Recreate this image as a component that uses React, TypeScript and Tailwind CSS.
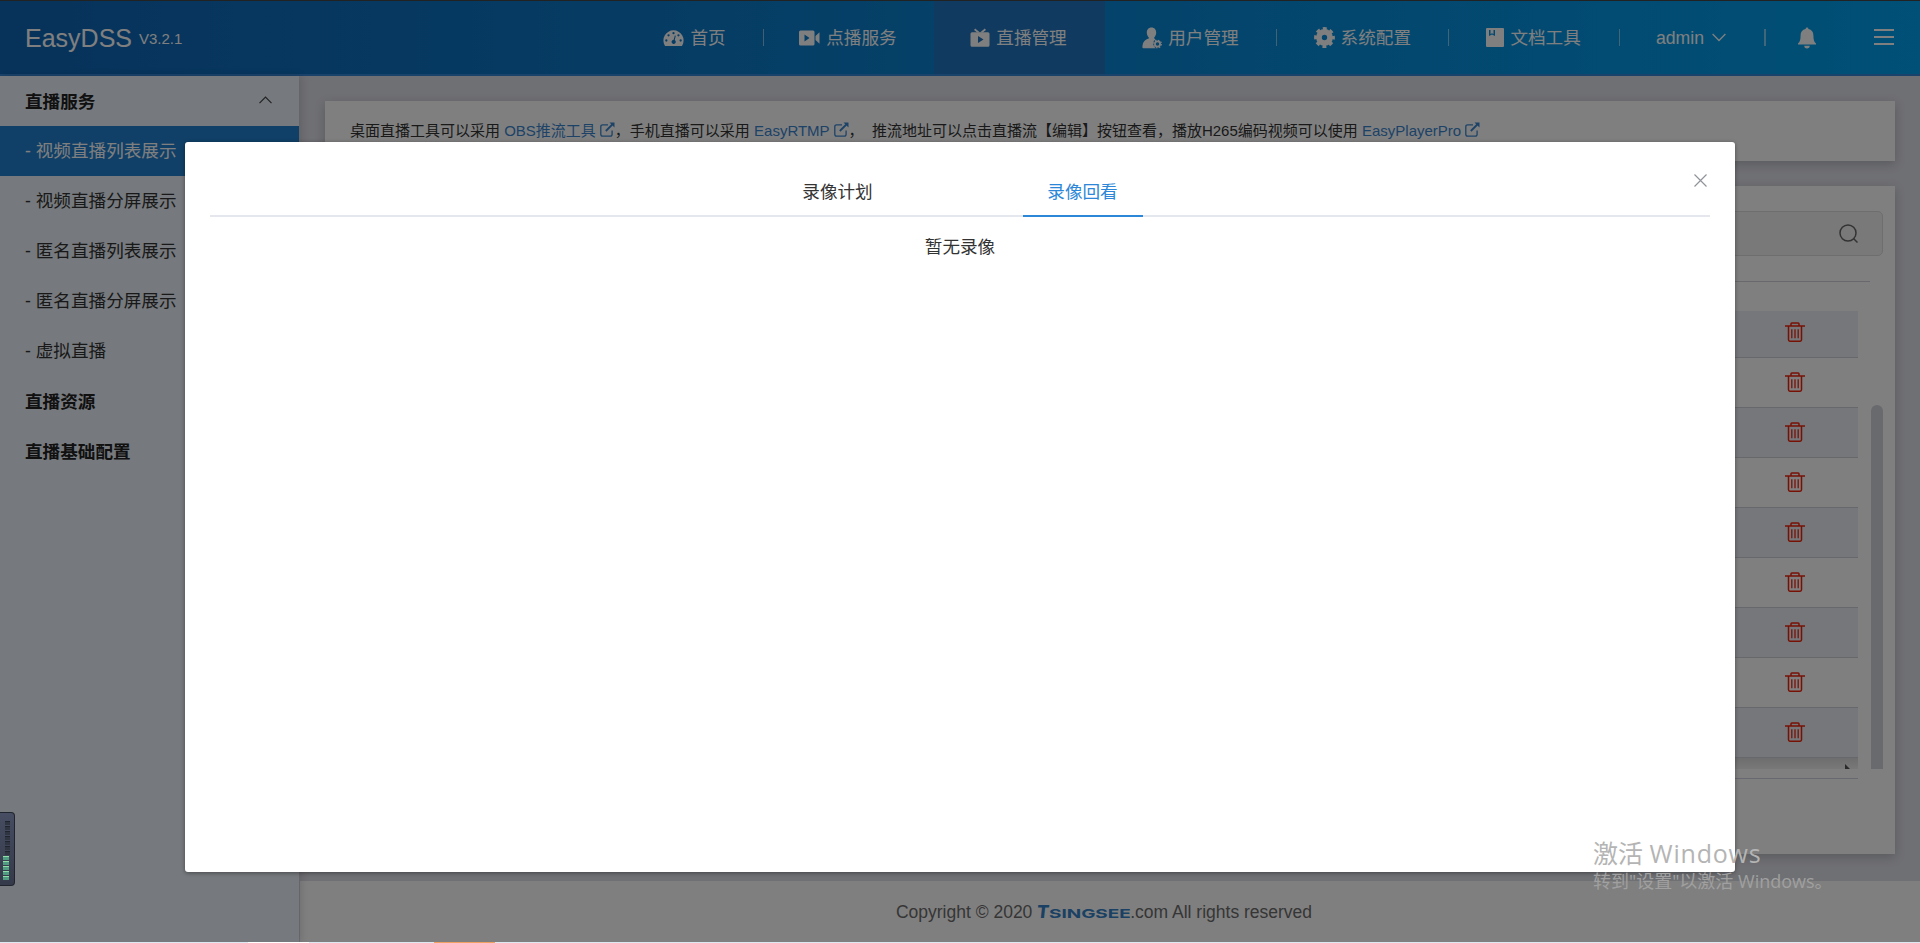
const navItems = [
  { label: "首页", icon: "dash", width: "w-[137px]" },
  { label: "点播服务", icon: "video", width: "w-[169.700px]" },
  { label: "直播管理", icon: "live", width: "w-[171.500px]" },
  { label: "用户管理", icon: "user", width: "w-[172.400px]" },
  { label: "系统配置", icon: "gear", width: "w-[171.300px]" },
  { label: "文档工具", icon: "book", width: "w-[171.300px]" },
];

const menuItems = ["视频直播列表展示", "视频直播分屏展示", "匿名直播列表展示", "匿名直播分屏展示", "虚拟直播"];

function NavIcon({ name }: { name: string }) {
  switch (name) {
    case "dash":
      return (
        <svg className="h-[18px] w-[21px]" viewBox="0 0 22 18" fill="currentColor">
          <path fillRule="evenodd" d="M11 1A10.500 10.500 0 0 0 1.700 16.500q.5.900 1.400.900h15.800q.9 0 1.400-.900A10.500 10.500 0 0 0 11 1Zm0 1.800a1.200 1.200 0 1 1 0 2.400 1.200 1.200 0 0 1 0-2.400ZM5.800 5a1.200 1.200 0 1 1 0 2.400 1.200 1.200 0 0 1 0-2.400Zm-2.300 5.400a1.200 1.200 0 1 1 0 2.400 1.200 1.200 0 0 1 0-2.400Zm15 0a1.200 1.200 0 1 1 0 2.400 1.200 1.200 0 0 1 0-2.400ZM16.200 5a1.200 1.200 0 1 1 0 2.400 1.200 1.200 0 0 1 0-2.400Zm-3.800 1.300 1 .3-1.100 4.600a2.200 2.200 0 1 1-1.100-.300Z" />
        </svg>
      );
    case "video":
      return (
        <svg className="h-[16px] w-[21px]" viewBox="0 0 21 16" fill="currentColor">
          <path fillRule="evenodd" d="M1.500.500h12.500q1.500 0 1.500 1.500v12q0 1.500-1.500 1.500H1.500Q0 15.500 0 14V2Q0 .5 1.500.500Zm4 4v7l5-3.500ZM16.500 6l4-3.800v11.600l-4-3.800Z" />
        </svg>
      );
    case "live":
      return (
        <svg className="h-[19px] w-[20px]" viewBox="0 0 20 19" fill="currentColor">
          <path d="m5.200.500 4.800 4 4.800-4 1.200 1.400L12.800 4.500H7.200L4 1.900Z" />
          <path fillRule="evenodd" d="M2 4.200h16q1.500 0 1.500 1.500v11.600q0 1.500-1.500 1.500H2q-1.500 0-1.500-1.500V5.700q0-1.500 1.500-1.500ZM8 8v7l5.500-3.500Z" />
        </svg>
      );
    case "user":
      return (
        <svg className="h-[22px] w-[20px]" viewBox="0 0 20 22" fill="currentColor">
          <path d="M9.500.5c3 0 4.700 2.200 4.700 5 0 2-.8 3.800-2 4.900v1.200l1.400.6a5 5 0 0 0-2.400 4.300c0 2.100 1 3.700 2.600 4.700H1.500Q.3 21.200.4 20c.4-5 2-7 6.400-8.600v-1C5.600 9.300 4.800 7.500 4.800 5.500c0-2.800 1.700-5 4.700-5Z" />
          <circle cx="15.500" cy="17" r="2.600" fill="none" stroke="currentColor" strokeWidth="1.700" />
          <circle cx="15.500" cy="17" r="3.800" fill="none" stroke="currentColor" strokeWidth="1.200" strokeDasharray="1.500 1.480" />
        </svg>
      );
    case "gear":
      return (
        <svg className="h-[21px] w-[21px]" viewBox="0 0 22 22" fill="currentColor">
          <circle cx="11" cy="11" r="5.800" fill="none" stroke="currentColor" strokeWidth="6" />
          <circle cx="11" cy="11" r="9.400" fill="none" stroke="currentColor" strokeWidth="3" strokeDasharray="4.100 3.283" strokeDashoffset="2.050" />
        </svg>
      );
    default:
      return (
        <svg className="h-[19px] w-[18px]" viewBox="0 0 18 19" fill="currentColor">
          <path fillRule="evenodd" d="M1 0h16q1 0 1 1v17q0 1-1 1H1q-1 0-1-1V1q0-1 1-1Zm2 2v6l3-1.500L9 8V2H7.500v4L6 5.200 4.500 6V2Z" />
        </svg>
      );
  }
}

function Header() {
  return (
    <header className="flex h-[76px] items-center border-t border-b-2 border-t-[#444] border-b-[#3586d8] bg-linear-to-r from-[#0f65b5] to-[#01a0ee] text-white">
      <div className="flex flex-1 items-center pl-[25px]">
        <span className="text-[25px] leading-[36px]">EasyDSS</span>
        <span className="mt-[3px] ml-[7px] text-[15px]">V3.2.1</span>
      </div>
      <nav className="flex h-full">
        {navItems.map((item, i) => (
          <div
            key={item.label}
            className={`relative flex h-full shrink-0 items-center justify-center gap-[6px] pr-[1.500px] text-[17.600px] ${item.width} ${i === 2 ? "bg-[#2075bf]" : ""}`}
          >
            <NavIcon name={item.icon} />
            <span className="pt-[2px]">{item.label}</span>
            {i !== 1 && i !== 2 && <i className="absolute right-0 h-[17px] w-px bg-white/50" />}
          </div>
        ))}
        <div className="relative flex w-[146px] items-center justify-center gap-2 pr-[4px] text-[17.600px]">
          <span className="pt-[2px]">admin</span>
          <svg className="h-[9px] w-[14px]" viewBox="0 0 14 9" fill="none" stroke="currentColor" strokeWidth="1.300">
            <path d="m.6 1 6.400 6.500L13.400 1" />
          </svg>
          <i className="absolute right-0 h-[17px] w-[2px] bg-white/50" />
        </div>
        <div className="flex w-[81px] items-center justify-center">
          <svg className="h-[22px] w-[18px]" viewBox="0 0 18 22" fill="currentColor">
            <path d="M7.600 2a1.400 1.400 0 0 1 2.800 0c3.400.7 5 3.100 5 6.400 0 4 .7 6.700 2.600 8.100v1H0v-1c1.900-1.400 2.600-4.100 2.600-8.100 0-3.300 1.600-5.700 5-6.400ZM6.300 18.700h5.400a2.700 2.700 0 0 1-5.400 0Z" />
          </svg>
        </div>
        <div className="flex w-[73px] items-center justify-center">
          <div className="flex w-[20px] flex-col gap-[5px] pb-[2px]">
            <i className="h-[2px] bg-white" />
            <i className="h-[2px] bg-white" />
            <i className="h-[2px] bg-white" />
          </div>
        </div>
      </nav>
    </header>
  );
}

function Sidebar() {
  return (
    <aside className="z-1 mr-px w-[299px] shrink-0 bg-[#ecf2fa] text-[17.600px] text-[#333] shadow-[2px_0_8px_rgba(0,0,0,0.15)]">
      <div className="flex h-[50px] items-center justify-between pt-[2px] pr-[27px] pl-[25px] font-bold text-[#222]">
        直播服务
        <svg className="mb-[4px] h-[8px] w-[13px]" viewBox="0 0 13 8" fill="none" stroke="#444" strokeWidth="1.200">
          <path d="m.5 7.200 6-6.200 6 6.200" />
        </svg>
      </div>
      {menuItems.map((item, i) => (
        <div key={item} className={`flex h-[50px] items-center pt-px pl-[25px] ${i === 0 ? "bg-[#2080cf] text-white" : ""}`}>
          <span>- {item}</span>
        </div>
      ))}
      <div className="flex h-[50px] items-center pt-[2px] pl-[25px] font-bold text-[#222]">直播资源</div>
      <div className="flex h-[50px] items-center pt-[2px] pl-[25px] font-bold text-[#222]">直播基础配置</div>
    </aside>
  );
}

function DocLink({ children }: { children: string }) {
  return (
    <a className="text-[#3a85cf]">
      {children}
      <svg className="ml-[4px] inline h-[15px] w-[15px] align-[-1px]" viewBox="0 0 15 15" fill="none" stroke="currentColor" strokeWidth="1.300">
        <path d="M8 2.800H2.700Q.8 2.800.8 4.700v7.500q0 1.900 1.900 1.900h7.500q1.900 0 1.900-1.900V8.500" />
        <path d="m5.800 9 6.500-6.500" strokeWidth="1.800" />
        <path d="M9.500.500h5v5Z" fill="currentColor" stroke="none" />
      </svg>
    </a>
  );
}

function TrashIcon() {
  return (
    <svg className="h-[20px] w-[20px]" viewBox="0 0 20 20" fill="none" stroke="#f0230a" strokeWidth="1.500">
      <path d="M0 4h20M6 4V1.800Q6 1 6.800 1h6.400q.8 0 .8.800V4M3.500 4v13.800q0 1.400 1.400 1.400h10.200q1.400 0 1.400-1.400V4" />
      <path d="M6.800 7.200v9M10 7.200v9M13.200 7.200v9" strokeWidth="1.300" />
    </svg>
  );
}

function Content() {
  return (
    <main className="flex min-w-0 flex-1 flex-col">
      <div className="flex flex-1 flex-col gap-[25px] p-[25px] pb-[27px]">
        <section className="h-[60px] bg-white pt-[19px] pl-[25px] text-[15px] leading-[22px] whitespace-pre text-[#333] shadow-[0_3px_10px_rgba(0,0,0,0.2)]">
          桌面直播工具可以采用 <DocLink>OBS推流工具</DocLink>，手机直播可以采用 <DocLink>EasyRTMP</DocLink>，  推流地址可以点击直播流【编辑】按钮查看，播放H265编码视频可以使用 <DocLink>EasyPlayerPro</DocLink>
        </section>
        <section className="flex flex-1 flex-col bg-white pt-[25px] pr-3 pl-[25px] shadow-[0_3px_10px_rgba(0,0,0,0.2)]">
          <div className="flex h-[45px] items-center justify-end rounded-[5px] border border-[#dcdcdc] bg-[#f2f2f2] pr-[24px]">
            <svg className="h-[19px] w-[19px]" viewBox="0 0 19 19" fill="none" stroke="#666" strokeWidth="1.500">
              <circle cx="9" cy="9" r="8" />
              <path d="m14.500 14.500 4 4" />
            </svg>
          </div>
          <div className="mt-[25px] mr-[13px] h-px bg-[#d2d2da]" />
          <div className="mt-[29px] flex h-[458px] gap-[13px]">
            <div className="flex-1 overflow-hidden">
              {Array.from({ length: 9 }, (_, i) => (
                <div
                  key={i}
                  className={`flex items-center justify-end border-b border-[#ccd1d8] pr-[53px] ${i === 0 ? "h-[47px] pb-[5px]" : "h-[50px] pb-[2px]"} ${i % 2 === 0 ? "bg-[#ebeef6]" : ""}`}
                >
                  <TrashIcon />
                </div>
              ))}
              <div className="flex h-[11px] items-end justify-end bg-linear-to-b from-[#dcdcdc] to-[#f1f1f1] pr-[8px]">
                <svg className="h-[5px] w-[5px]" viewBox="0 0 5 5">
                  <path d="M0 0v5h5Z" fill="#555" />
                </svg>
              </div>
            </div>
            <div className="mt-[94px] w-[12px] rounded-t-full bg-[#d3d4da]" />
          </div>
          <div className="mt-[9px] mr-[25px] h-px bg-[#cfd0e0]" />
        </section>
      </div>
      <footer className="flex h-[62px] items-center justify-center bg-white pr-[12px] text-[17.500px] text-[#6c6c6c]">
        Copyright © 2020&nbsp;
        <Brand />
        .com All rights reserved
      </footer>
    </main>
  );
}

function Brand() {
  return (
    <span className="flex w-[93px] items-baseline font-[Inter] leading-none font-bold text-[#3583c8]">
      <span className="origin-left skew-x-[-6deg] text-[18px] font-extrabold">T</span>
      <span className="origin-left scale-x-[1.540] text-[12.300px]">SINGSEE</span>
    </span>
  );
}

function RecordDialog() {
  return (
    <div className="relative h-[730px] w-[1550px] rounded-[3px] bg-white px-[25px] pt-[25px] text-[17.600px] text-[#333] shadow-[0_1px_4px_rgba(0,0,0,0.4)]">
      <svg className="absolute top-[32px] right-[28px] h-[13px] w-[13px]" viewBox="0 0 13 13" stroke="#909399" strokeWidth="1.200">
        <path d="m.5.500 12 12m0-12-12 12" />
      </svg>
      <div className="flex h-[50px] justify-center gap-[125px] border-b-2 border-[#e4e7ed]">
        <div className="flex h-[50px] w-[120px] items-center justify-center">录像计划</div>
        <div className="flex h-[50px] w-[120px] items-center justify-center border-b-2 border-[#2d87d8] pt-[2px] text-[#2d87d8]">录像回看</div>
      </div>
      <p className="mt-[17px] text-center leading-[27px]">暂无录像</p>
    </div>
  );
}

function LevelMeter() {
  return (
    <div className="absolute top-[812px] left-0 flex h-[74px] w-[15px] flex-col items-center rounded-r-[4px] border border-l-0 border-[#20242e] bg-linear-to-b from-[#474d62] to-[#353a4a] pt-[8px]">
      {Array.from({ length: 12 }, (_, i) => (
        <i
          key={i}
          className={`mb-px h-[4px] shrink-0 border-t ${i > 6 ? "mr-[2px] w-[6px] border-[#8ee0a8] bg-[#4f9d80]" : "w-[5px] border-[#20242e] bg-[#303542]"}`}
        />
      ))}
    </div>
  );
}

export default function App() {
  return (
    <div className="relative h-[943px] w-[1920px] overflow-hidden bg-[#dfe0e8] font-['Liberation_Sans','Noto_Sans_CJK_SC',sans-serif]">
      <div className="flex h-[943px] flex-col">
        <Header />
        <div className="flex flex-1">
          <Sidebar />
          <Content />
        </div>
      </div>
      <div className="absolute inset-x-0 top-0 z-10 flex h-[942px] justify-center bg-black/50 pt-[142px]">
        <RecordDialog />
      </div>
      <div className="absolute inset-x-0 bottom-0 z-10 h-px bg-[#dce8f2]" />
      <div className="absolute bottom-0 left-[248px] z-10 h-px w-[61px] bg-white" />
      <div className="absolute bottom-0 left-[434px] z-10 h-px w-[61px] bg-[#f0a060]" />
      <div className="absolute inset-0 z-20">
        <LevelMeter />
        <div className="absolute top-[834px] left-[1593px] font-['Open_Sans','Noto_Sans_CJK_SC',sans-serif] text-[#b4b4b4]">
          <p className="text-[25px] leading-[38px]">
            激活 <span className="tracking-[0.800px]">Windows</span>
          </p>
          <p className="text-[18px] leading-[18px] text-[#a0a0a0]">转到"设置"以激活 Windows。</p>
        </div>
      </div>
    </div>
  );
}
